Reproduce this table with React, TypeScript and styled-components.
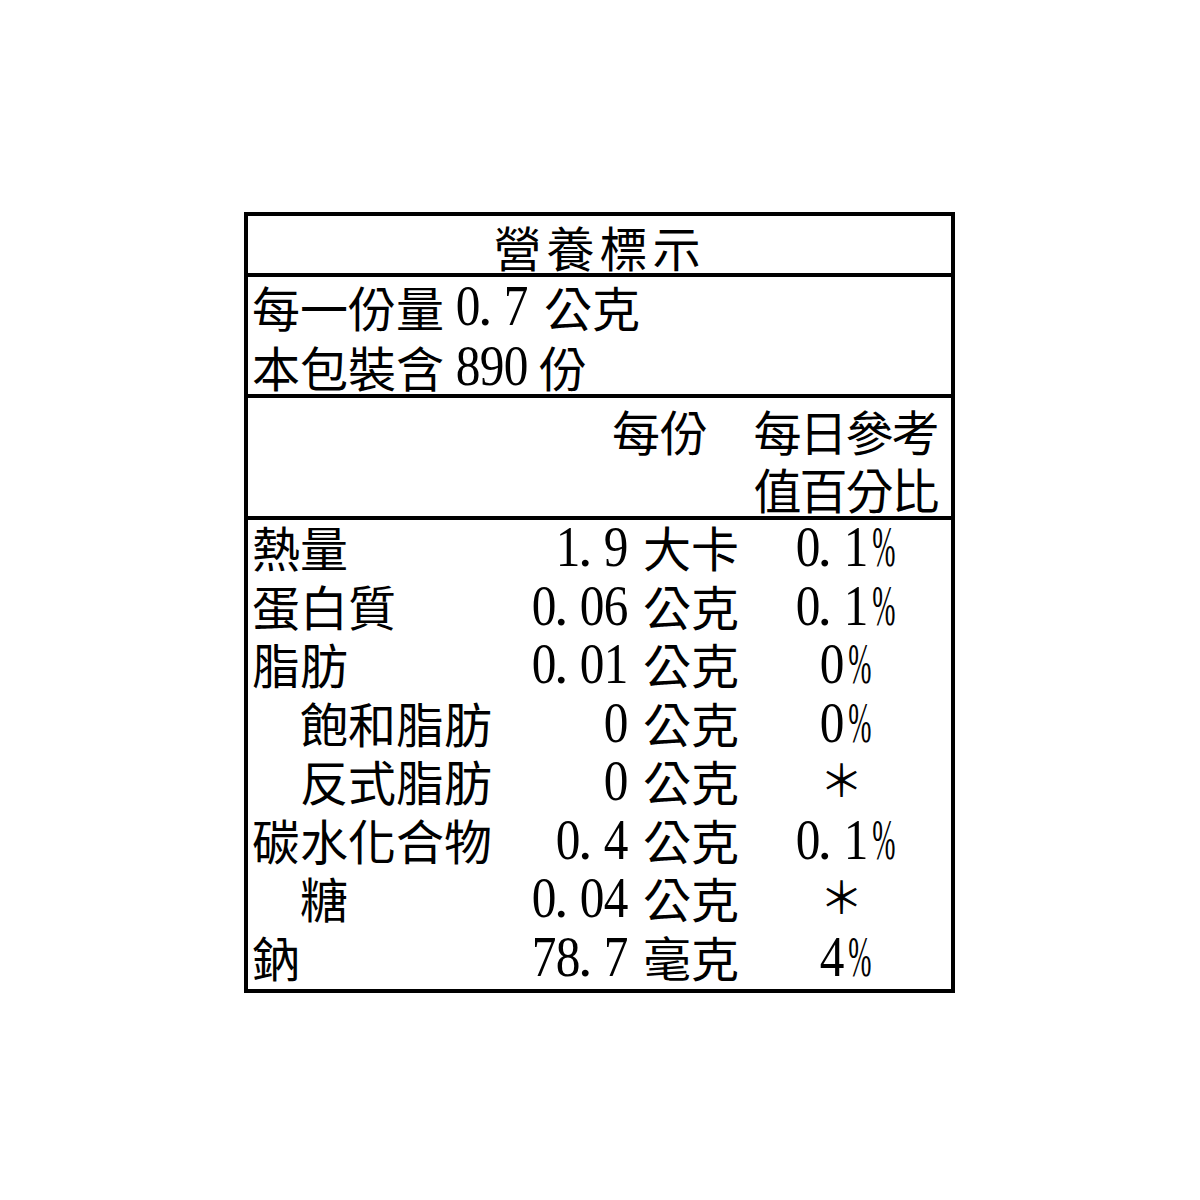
import React from "react";
import styled, { createGlobalStyle } from "styled-components";

const GlobalStyle = createGlobalStyle`
  html, body {
    margin: 0;
    padding: 0;
    background: #ffffff;
  }
  body {
    font-family: "Noto Sans CJK TC", "Noto Sans", sans-serif;
    color: #000000;
  }
`;

const Page = styled.div`
  width: 1200px;
  height: 1200px;
  padding: 212px 0 0 244px;
  box-sizing: border-box;
`;

const Label = styled.div`
  width: 711px;
  height: 781px;
  box-sizing: border-box;
  border: 4px solid #000;
  display: flex;
  flex-direction: column;
  font-size: 48px;
`;

const Title = styled.div`
  height: 61px;
  box-sizing: border-box;
  border-bottom: 4px solid #000;
  padding-top: 3px;
  display: flex;
  justify-content: center;
  align-items: center;
  letter-spacing: 5px;
  line-height: 1;
`;

const Serving = styled.div`
  height: 121px;
  box-sizing: border-box;
  border-bottom: 4px solid #000;
  padding: 0 4px;
  line-height: 58px;
`;

const ServingLine = styled.div`
  display: flex;
  align-items: baseline;
  white-space: nowrap;
`;

const ServingUnit = styled.span`
  margin-left: ${(p: { $gap: number }) => p.$gap}px;
`;

const Columns = styled.div`
  display: grid;
  grid-template-columns: 274px 100px 118px 1fr;
  padding: 0 4px;
`;

const Header = styled(Columns)`
  height: 122px;
  box-sizing: border-box;
  border-bottom: 4px solid #000;
  padding-top: 3px;
  line-height: 58px;
`;

const HeadPer = styled.div`
  grid-column: 2 / 4;
  text-align: right;
  padding-right: 36px;
  white-space: nowrap;
`;

const HeadDaily = styled.div`
  grid-column: 4;
  text-align: center;
  letter-spacing: -2px;
  white-space: nowrap;
`;

const Body = styled.div`
  display: flex;
  flex-direction: column;
`;

const Row = styled(Columns)`
  height: 58.5px;
  line-height: 52px;
  white-space: nowrap;
`;

const Name = styled.div<{ $indent?: boolean }>`
  padding-left: ${(p) => (p.$indent ? "48px" : "0")};
`;

const Amount = styled.div`
  text-align: right;
`;

const Unit = styled.div`
  padding-left: 17px;
`;

const Daily = styled.div`
  text-align: center;
  padding-right: 8px;
`;

const Glyph = styled.span<{ $dot?: boolean; $pct?: boolean }>`
  display: inline-block;
  width: 24px;
  text-align: ${(p) => (p.$dot ? "left" : "center")};
  font-family: "Liberation Serif", "Times New Roman", serif;
  font-size: 58px;
  line-height: 1;
  transform: translateY(-2px) scaleX(${(p) => (p.$pct ? 0.48 : p.$dot ? 1 : 0.85)});
  transform-origin: ${(p) => (p.$dot ? "left" : "center")} bottom;
`;

const Star = styled.span`
  display: inline-block;
  font-size: 44px;
  transform: translateY(-4px);
`;

function Num({ value }: { value: string }) {
  return (
    <>
      {value.split("").map((c, i) => (
        <Glyph key={i} $dot={c === "."} $pct={c === "%"}>
          {c}
        </Glyph>
      ))}
    </>
  );
}

interface Item {
  name: string;
  indent?: boolean;
  amount: string;
  unit: string;
  daily: string;
}

const items: Item[] = [
  { name: "熱量", amount: "1.9", unit: "大卡", daily: "0.1%" },
  { name: "蛋白質", amount: "0.06", unit: "公克", daily: "0.1%" },
  { name: "脂肪", amount: "0.01", unit: "公克", daily: "0%" },
  { name: "飽和脂肪", indent: true, amount: "0", unit: "公克", daily: "0%" },
  { name: "反式脂肪", indent: true, amount: "0", unit: "公克", daily: "*" },
  { name: "碳水化合物", amount: "0.4", unit: "公克", daily: "0.1%" },
  { name: "糖", indent: true, amount: "0.04", unit: "公克", daily: "*" },
  { name: "鈉", amount: "78.7", unit: "毫克", daily: "4%" },
];

export default function App() {
  return (
    <Page>
      <GlobalStyle />
      <Label>
        <Title>營養標示</Title>
        <Serving>
          <ServingLine>
            每一份量
            <ServingUnit $gap={10}>
              <Num value="0.7" />
            </ServingUnit>
            <ServingUnit $gap={18}>公克</ServingUnit>
          </ServingLine>
          <ServingLine>
            本包裝含
            <ServingUnit $gap={10}>
              <Num value="890" />
            </ServingUnit>
            <ServingUnit $gap={13}>份</ServingUnit>
          </ServingLine>
        </Serving>
        <Header>
          <HeadPer>每份</HeadPer>
          <HeadDaily>
            每日參考
            <br />
            值百分比
          </HeadDaily>
        </Header>
        <Body>
          {items.map((it) => (
            <Row key={it.name}>
              <Name $indent={it.indent}>{it.name}</Name>
              <Amount>
                <Num value={it.amount} />
              </Amount>
              <Unit>{it.unit}</Unit>
              <Daily>
                {it.daily === "*" ? <Star>＊</Star> : <Num value={it.daily} />}
              </Daily>
            </Row>
          ))}
        </Body>
      </Label>
    </Page>
  );
}
